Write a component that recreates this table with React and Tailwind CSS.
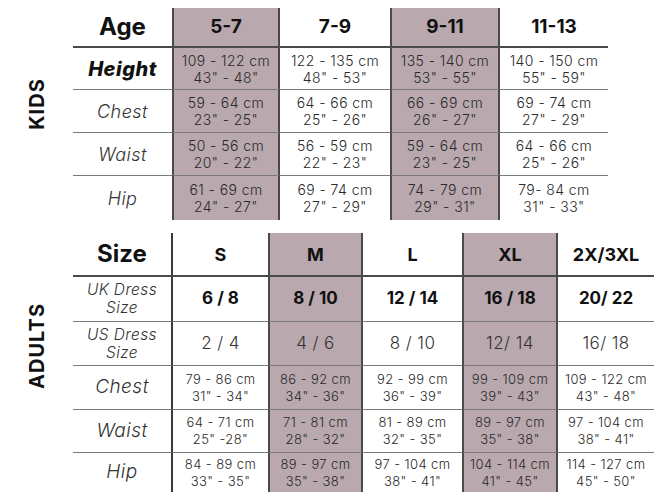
const kidsCols = [
  { label: "5-7", hi: true, cells: [["109 - 122 cm", '43" - 48"'], ["59 - 64 cm", '23" - 25"'], ["50 - 56 cm", '20" - 22"'], ["61 - 69 cm", '24" - 27"']] },
  { label: "7-9", cells: [["122 - 135 cm", '48" - 53"'], ["64 - 66 cm", '25" - 26"'], ["56 - 59 cm", '22" - 23"'], ["69 - 74 cm", '27" - 29"']] },
  { label: "9-11", hi: true, cells: [["135 - 140 cm", '53" - 55"'], ["66 - 69 cm", '26" - 27"'], ["59 - 64 cm", '23" - 25"'], ["74 - 79 cm", '29" - 31"']] },
  { label: "11-13", cells: [["140 - 150 cm", '55" - 59"'], ["69 - 74 cm", '27" - 29"'], ["64 - 66 cm", '25" - 26"'], ["79- 84 cm", '31" - 33"']] },
];

const adultCols = [
  { label: "S", uk: "6 / 8", us: "2 / 4", left: true, cells: [["79 - 86 cm", '31" - 34"'], ["64 - 71 cm", '25" -28"'], ["84 - 89 cm", '33" - 35"']] },
  { label: "M", uk: "8 / 10", us: "4 / 6", hi: true, cells: [["86 - 92 cm", '34" - 36"'], ["71 - 81 cm", '28" - 32"'], ["89 - 97 cm", '35" - 38"']] },
  { label: "L", uk: "12 / 14", us: "8 / 10", cells: [["92 - 99 cm", '36" - 39"'], ["81 - 89 cm", '32" - 35"'], ["97 - 104 cm", '38" - 41"']] },
  { label: "XL", uk: "16 / 18", us: "12/ 14", hi: true, cells: [["99 - 109 cm", '39" - 43"'], ["89 - 97 cm", '35" - 38"'], ["104 - 114 cm", '41" - 45"']] },
  { label: "2X/3XL", uk: "20/ 22", us: "16/ 18", cells: [["109 - 122 cm", '43" - 48"'], ["97 - 104 cm", '38" - 41"'], ["114 - 127 cm", '45" - 50"']] },
];

const font = { fontFamily: "Inter, 'DejaVu Sans', sans-serif" };

function Cell({ hi, left, head, last, children, className = "" }) {
  return (
    <div
      className={
        "flex flex-col items-center justify-center text-center " +
        (hi ? "bg-[#b9a8ae] border-x-2 border-x-[#4a4a4a] " : "") +
        (left ? "border-l-2 border-l-[#3a3a3a] " : "") +
        (head ? "border-b-2 border-b-[#4a4a4a] " : last ? "" : "border-b border-b-[#7a7a7a] ") +
        className
      }
    >
      {children}
    </div>
  );
}

function Measure({ v }) {
  return (
    <>
      <span>{v[0]}</span>
      <span>{v[1]}</span>
    </>
  );
}

function SideLabel({ text, className }) {
  return (
    <div className={"w-[73px] flex items-center justify-center " + className}>
      <span className="-rotate-90 text-[20px] font-bold tracking-wider text-[#111] whitespace-nowrap">
        {text}
      </span>
    </div>
  );
}

export default function App() {
  const kidRows = ["Height", "Chest", "Waist", "Hip"];
  const adultRows = ["Chest", "Waist", "Hip"];
  return (
    <div className="w-[658px] h-[499px] bg-white text-[#2a2a2a] overflow-hidden" style={font}>
      {/* kids */}
      <div className="flex pt-2">
        <SideLabel text="KIDS" className="pb-5" />
        <div className="grid grid-cols-[99px_108px_110px_110px_108px] grid-rows-[40px_42px_43px_43px_44px] grid-flow-col">
          <Cell head>
            <span className="text-[24px] font-bold text-[#111]">Age</span>
          </Cell>
          {kidRows.map((r, i) => (
            <Cell key={r} last={i === kidRows.length - 1}>
              <span
                className={
                  i === 0
                    ? "text-[20px] font-extrabold italic tracking-wide text-[#111]"
                    : "text-[18px] font-light italic tracking-wide text-[#333]"
                }
              >
                {r}
              </span>
            </Cell>
          ))}
          {kidsCols.map((c) => (
            <>
              <Cell key={c.label} hi={c.hi} head>
                <span className="text-[19px] font-bold text-[#111]">{c.label}</span>
              </Cell>
              {c.cells.map((v, i) => (
                <Cell key={c.label + i} hi={c.hi} last={i === c.cells.length - 1} className="text-[14px] leading-[17px] tracking-[0.03em] font-light">
                  <Measure v={v} />
                </Cell>
              ))}
            </>
          ))}
        </div>
      </div>

      {/* adults */}
      <div className="flex mt-[13px]">
        <SideLabel text="ADULTS" className="pb-[34px]" />
        <div className="grid grid-cols-[98px_97px_95px_99px_96px_96px] grid-rows-[44px_45px_44px_44px_43px_39px] grid-flow-col">
          <Cell head>
            <span className="text-[24px] font-bold text-[#111]">Size</span>
          </Cell>
          <Cell className="text-[15.5px] leading-[18px] font-light italic tracking-wide text-[#333]">
            <span>UK Dress</span>
            <span>Size</span>
          </Cell>
          <Cell className="text-[15.5px] leading-[18px] font-light italic tracking-wide text-[#333]">
            <span>US Dress</span>
            <span>Size</span>
          </Cell>
          {adultRows.map((r, i) => (
            <Cell key={r} last={i === adultRows.length - 1}>
              <span className="text-[19px] font-light italic tracking-wide text-[#333]">{r}</span>
            </Cell>
          ))}
          {adultCols.map((c) => (
            <>
              <Cell key={c.label} hi={c.hi} left={c.left} head>
                <span className="text-[18px] font-bold text-[#111]">{c.label}</span>
              </Cell>
              <Cell hi={c.hi} left={c.left}>
                <span className="text-[17px] font-bold text-[#111]">{c.uk}</span>
              </Cell>
              <Cell hi={c.hi} left={c.left}>
                <span className="text-[17px] font-light tracking-wide text-[#333]">{c.us}</span>
              </Cell>
              {c.cells.map((v, i) => (
                <Cell key={c.label + i} hi={c.hi} left={c.left} last={i === c.cells.length - 1} className="text-[13px] leading-[17px] tracking-[0.03em] font-light">
                  <Measure v={v} />
                </Cell>
              ))}
            </>
          ))}
        </div>
      </div>
    </div>
  );
}
